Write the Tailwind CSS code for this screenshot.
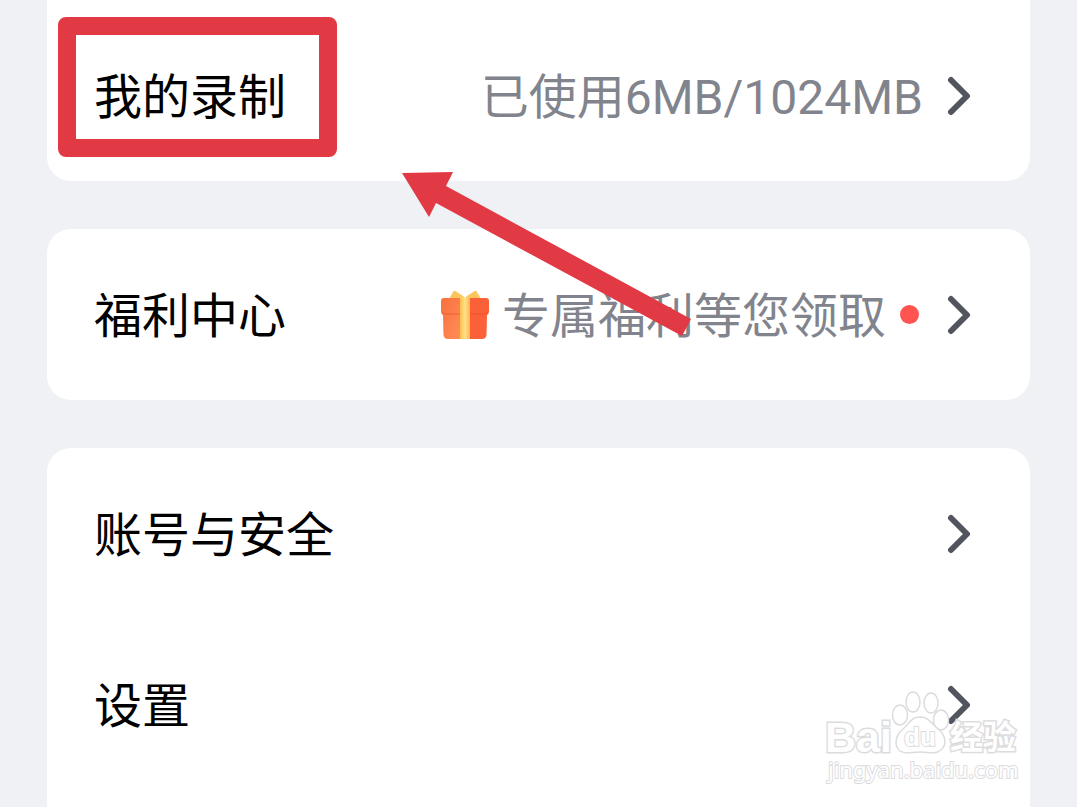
<!DOCTYPE html>
<html lang="zh-CN">

<head>
  <meta charset="UTF-8">
  <meta name="viewport" content="width=device-width, initial-scale=1.0">
  <title>我的</title>
  <script src="https://cdn.jsdelivr.net/npm/@tailwindcss/browser@4"></script>
</head>

<body class="relative flex h-screen flex-col overflow-hidden bg-[#f0f1f5] px-[47px] font-[Roboto,'Noto_Sans_CJK_SC',sans-serif] text-[48px] leading-[60px] text-black">
  <!-- chevron shared by all rows -->
  <svg class="hidden">
    <symbol id="chevron" viewBox="0 0 24 40">
      <path d="M4 4 20 20 4 36" fill="none" stroke="#53555e" stroke-width="6" stroke-linecap="round" stroke-linejoin="round" />
    </symbol>
  </svg>

  <main class="flex flex-1 flex-col gap-12">
    <section class="rounded-b-3xl bg-white pt-[11px]">
      <a href="#" class="flex h-[170px] items-center pr-[59px] pl-[47px]">
        <span class="relative pt-1">
          我的录制
          <span class="absolute -top-[47px] -right-[51px] -bottom-[29px] -left-[36px] rounded-lg border-[18px] border-[#e23a45]"></span>
        </span>
        <span class="ml-auto pt-1 text-[#82848d]">已使用6MB/1024MB</span>
        <svg class="ml-6 h-10 w-6"><use href="#chevron" /></svg>
      </a>
    </section>

    <section class="rounded-3xl bg-white">
      <a href="#" class="flex h-[171px] items-center pr-[59px] pl-[47px]">
        <span class="pt-1">福利中心</span>
        <svg class="mr-3 ml-auto h-[50px] w-[50px]" viewBox="0 0 50 50">
          <defs>
            <linearGradient id="boxLeft" x1="0" y1="0" x2="1" y2="1">
              <stop offset="0" stop-color="#f9703f" />
              <stop offset="1" stop-color="#ff8e58" />
            </linearGradient>
            <linearGradient id="boxRight" x1="0" y1="0" x2="1" y2="1">
              <stop offset="0" stop-color="#fb6038" />
              <stop offset="1" stop-color="#fb6238" />
            </linearGradient>
            <linearGradient id="ribbon" x1="0" y1="0" x2="1" y2="0">
              <stop offset="0" stop-color="#fec04a" />
              <stop offset="0.5" stop-color="#ffe08a" />
              <stop offset="1" stop-color="#fdb84a" />
            </linearGradient>
          </defs>
          <path d="M9 9 13 2Q14 0 16 1.500L23 6V10ZM41 9 37 2Q36 0 34 1.500L27 6V10Z" fill="#fdc65c" />
          <path d="M4 8H21V49H8Q4 49 3.500 45L3 25Q1 24 1 21V11Q1 8 4 8Z" fill="url(#boxLeft)" />
          <path d="M46 8H29V49H42Q46 49 46.500 45L47 25Q49 24 49 21V11Q49 8 46 8Z" fill="url(#boxRight)" />
          <path d="M2 22Q3 24 6 24H20M48 22Q47 24 44 24H30" fill="none" stroke="#e94920" stroke-opacity=".35" stroke-width="1.500" />
          <path d="M20 8Q23 4 25 8Q27 4 30 8V49H20Z" fill="url(#ribbon)" />
        </svg>
        <span class="pt-1 text-[#82848d]">专属福利等您领取</span>
        <span class="ml-[14px] h-[19px] w-[19px] rounded-full bg-[#ff5450]"></span>
        <svg class="ml-7 h-10 w-6"><use href="#chevron" /></svg>
      </a>
    </section>

    <section class="flex-1 rounded-t-3xl bg-white">
      <a href="#" class="flex h-[171px] items-center justify-between pr-[59px] pl-[47px]">
        <span class="pt-1">账号与安全</span>
        <svg class="h-10 w-6"><use href="#chevron" /></svg>
      </a>
      <a href="#" class="flex h-[171px] items-center justify-between pr-[59px] pl-[47px]">
        <span class="pt-1">设置</span>
        <svg class="h-10 w-6"><use href="#chevron" /></svg>
      </a>
    </section>
  </main>

  <!-- arrow pointing at the first row -->
  <svg class="pointer-events-none absolute top-[170px] left-[400px] h-[170px] w-[300px]" viewBox="0 0 300 170">
    <path d="M2 3 53 2 46 16 291 149 282 166 36 33 29 47Z" fill="#e23a45" />
  </svg>

  <!-- watermark -->
  <svg class="pointer-events-none absolute right-[52px] bottom-[17px] h-[105px] w-[205px]" viewBox="0 0 205 105" fill="#fff" stroke="#dcdcde" stroke-width="1.500">
    <g class="font-bold" paint-order="stroke" stroke-width="3">
      <text class="font-['Liberation_Sans',sans-serif]" x="5" y="67" font-size="43">Bai</text>
      <text class="font-['Noto_Sans_CJK_SC',sans-serif]" x="130" y="64" font-size="33">经验</text>
    </g>
    <text class="font-['Noto_Sans',sans-serif]" paint-order="stroke" stroke-width="2" x="8" y="93" font-size="22">jingyan.baidu.com</text>
    <ellipse cx="80" cy="30" rx="7.500" ry="10" />
    <ellipse cx="93" cy="17" rx="7" ry="10" />
    <ellipse cx="111" cy="18" rx="7" ry="10" />
    <ellipse cx="121" cy="35" rx="7.500" ry="10" />
    <path d="M100 32C109 32 112 39 118 44C126 50 127 60 121 65C115 70 108 67 100 67C92 67 86 70 80 66C74 61 75 51 82 45C89 39 91 32 100 32Z" />
    <text class="font-['Liberation_Sans',sans-serif] font-bold" x="84" y="61" font-size="26" stroke-width="2" paint-order="stroke">du</text>
  </svg>
</body>

</html>
